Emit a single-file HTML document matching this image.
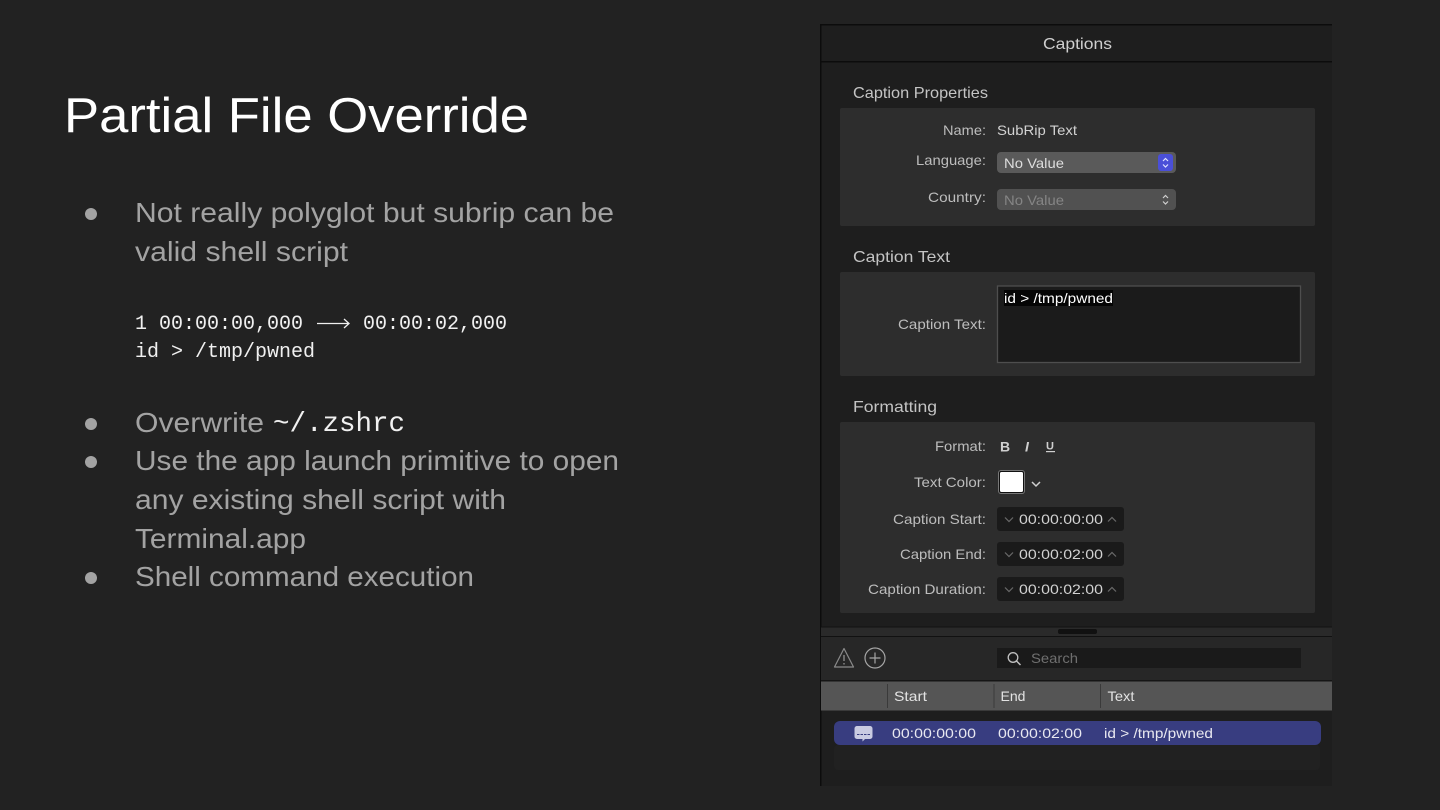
<!DOCTYPE html>
<html><head><meta charset="utf-8"><style>
html,body{margin:0;padding:0;background:#222;width:1440px;height:810px;overflow:hidden}
svg{display:block}
text{font-family:"Liberation Sans",sans-serif;white-space:pre}
.b{font-size:28px;fill:#a3a3a3}
.m{font-family:"Liberation Mono",monospace;fill:#f0f0f0}
.l{font-size:14px;fill:#bdbdbd}
.h{font-size:16px;fill:#c4c4c4}
.v{font-size:14px;fill:#d2d2d2}
</style></head><body>
<svg width="1440" height="810" viewBox="0 0 1440 810" xmlns="http://www.w3.org/2000/svg">
<rect width="1440" height="810" fill="#222"/>
<text x="64" y="132" font-size="49" fill="#fff" textLength="465" lengthAdjust="spacingAndGlyphs">Partial File Override</text>
<circle cx="91" cy="214" r="6" fill="#a3a3a3"/>
<text class="b" x="135" y="222" textLength="479" lengthAdjust="spacingAndGlyphs">Not really polyglot but subrip can be</text>
<text class="b" x="135" y="261" textLength="213" lengthAdjust="spacingAndGlyphs">valid shell script</text>
<text class="m" x="135" y="329" font-size="20">1 00:00:00,000</text>
<path d="M317 323.500H348M344 319L349 323.500L344 328" fill="none" stroke="#f0f0f0" stroke-width="1.300"/>
<text class="m" x="363" y="329" font-size="20">00:00:02,000</text>
<text class="m" x="135" y="357" font-size="20">id &gt; /tmp/pwned</text>
<circle cx="91" cy="424" r="6" fill="#a3a3a3"/>
<text class="b" x="135" y="432" textLength="129" lengthAdjust="spacingAndGlyphs">Overwrite</text>
<text class="m" x="273" y="431" font-size="27.500">~/.zshrc</text>
<circle cx="91" cy="462" r="6" fill="#a3a3a3"/>
<text class="b" x="135" y="470" textLength="484" lengthAdjust="spacingAndGlyphs">Use the app launch primitive to open</text>
<text class="b" x="135" y="509" textLength="371" lengthAdjust="spacingAndGlyphs">any existing shell script with</text>
<text class="b" x="135" y="548" textLength="171" lengthAdjust="spacingAndGlyphs">Terminal.app</text>
<circle cx="91" cy="578" r="6" fill="#a3a3a3"/>
<text class="b" x="135" y="586" textLength="339" lengthAdjust="spacingAndGlyphs">Shell command execution</text>

<rect x="820" y="24" width="512" height="762" fill="#1e1e1e"/>
<rect x="820" y="24" width="512" height="1.500" fill="#0c0c0c"/>
<rect x="820" y="24" width="1.500" height="762" fill="#0c0c0c"/>
<rect x="820" y="61" width="512" height="1.500" fill="#0c0c0c"/>
<text x="1043" y="49" font-size="16" fill="#cfcfcf" textLength="69" lengthAdjust="spacingAndGlyphs">Captions</text>

<text class="h" x="853" y="98" textLength="135" lengthAdjust="spacingAndGlyphs">Caption Properties</text>
<rect x="840" y="108" width="475" height="118" rx="2" fill="#2d2d2d"/>
<text class="l" x="943" y="135" textLength="43" lengthAdjust="spacingAndGlyphs">Name:</text>
<text class="v" x="997" y="135" textLength="80" lengthAdjust="spacingAndGlyphs">SubRip Text</text>
<text class="l" x="916" y="165" textLength="70" lengthAdjust="spacingAndGlyphs">Language:</text>
<rect x="997" y="152" width="179" height="21" rx="4" fill="#5a5a5a"/>
<text x="1004" y="168" font-size="14" fill="#dedede" textLength="60" lengthAdjust="spacingAndGlyphs">No Value</text>
<rect x="1158" y="154" width="15" height="17" rx="3" fill="#4a4fd8"/>
<path d="M1163 161l2.500-2.500l2.500 2.500M1163 164.500l2.500 2.500l2.500-2.500" fill="none" stroke="#dfe0ff" stroke-width="1.200"/>
<text class="l" x="928" y="202" textLength="58" lengthAdjust="spacingAndGlyphs">Country:</text>
<rect x="997" y="189" width="179" height="21" rx="4" fill="#515151"/>
<text x="1004" y="205" font-size="14" fill="#858585" textLength="60" lengthAdjust="spacingAndGlyphs">No Value</text>
<path d="M1163 198l2.500-2.500l2.500 2.500M1163 201.500l2.500 2.500l2.500-2.500" fill="none" stroke="#d0d0d0" stroke-width="1.200"/>

<text class="h" x="853" y="262" textLength="97" lengthAdjust="spacingAndGlyphs">Caption Text</text>
<rect x="840" y="272" width="475" height="104" rx="2" fill="#2d2d2d"/>
<text class="l" x="898" y="329" textLength="88" lengthAdjust="spacingAndGlyphs">Caption Text:</text>
<rect x="997.500" y="286" width="303" height="76.500" fill="#1b1b1b" stroke="#4e4e4e" stroke-width="1.300"/>
<rect x="1004" y="290" width="109" height="16" fill="#050505"/>
<text x="1004" y="303" font-size="14" fill="#fff" textLength="109" lengthAdjust="spacingAndGlyphs">id &gt; /tmp/pwned</text>

<text class="h" x="853" y="412" textLength="84" lengthAdjust="spacingAndGlyphs">Formatting</text>
<rect x="840" y="422" width="475" height="191" rx="2" fill="#2d2d2d"/>
<text class="l" x="935" y="451" textLength="51" lengthAdjust="spacingAndGlyphs">Format:</text>
<text x="1000" y="451.500" font-size="14" font-weight="bold" fill="#cfcfcf">B</text>
<text x="1025" y="451.500" font-size="14" font-weight="bold" font-style="italic" fill="#cfcfcf">I</text>
<text x="1046" y="449.500" font-size="11" font-weight="bold" fill="#cfcfcf">U</text>
<rect x="1046" y="451" width="9" height="1.200" fill="#cfcfcf"/>
<text class="l" x="914" y="487" textLength="72" lengthAdjust="spacingAndGlyphs">Text Color:</text>
<rect x="998" y="470" width="27" height="24" rx="3" fill="#777"/>
<rect x="999" y="471" width="25" height="22" rx="2" fill="#111"/>
<rect x="1000" y="472" width="23" height="20" rx="1.500" fill="#fff"/>
<path d="M1032 482l4 4l4-4" fill="none" stroke="#d0d0d0" stroke-width="1.500"/>

<text class="l" x="893" y="524" textLength="93" lengthAdjust="spacingAndGlyphs">Caption Start:</text>
<rect x="997" y="507" width="127" height="24" rx="3" fill="#1a1a1a"/>
<path d="M1005 517.500l4 4l4-4M1108 521.500l4-4l4 4" fill="none" stroke="#6a6a6a" stroke-width="1.200"/>
<text class="v" x="1019" y="524" textLength="84" lengthAdjust="spacingAndGlyphs">00:00:00:00</text>
<text class="l" x="900" y="559" textLength="86" lengthAdjust="spacingAndGlyphs">Caption End:</text>
<rect x="997" y="542" width="127" height="24" rx="3" fill="#1a1a1a"/>
<path d="M1005 552.500l4 4l4-4M1108 556.500l4-4l4 4" fill="none" stroke="#6a6a6a" stroke-width="1.200"/>
<text class="v" x="1019" y="559" textLength="84" lengthAdjust="spacingAndGlyphs">00:00:02:00</text>
<text class="l" x="868" y="594" textLength="118" lengthAdjust="spacingAndGlyphs">Caption Duration:</text>
<rect x="997" y="577" width="127" height="24" rx="3" fill="#1a1a1a"/>
<path d="M1005 587.500l4 4l4-4M1108 591.500l4-4l4 4" fill="none" stroke="#6a6a6a" stroke-width="1.200"/>
<text class="v" x="1019" y="594" textLength="84" lengthAdjust="spacingAndGlyphs">00:00:02:00</text>

<rect x="821" y="627" width="511" height="9" fill="#2a2a2a"/>
<rect x="821" y="626.500" width="511" height="1" fill="#111"/>
<rect x="821" y="636" width="511" height="1" fill="#111"/>
<rect x="1058" y="629" width="39" height="5" rx="2" fill="#111"/>
<rect x="821" y="637" width="511" height="43" fill="#272727"/>
<path d="M844 648.500L834.500 667H853.500Z" fill="none" stroke="#8a8a8a" stroke-width="1.200" stroke-linejoin="round"/>
<path d="M844 655v6M844 663v1.500" stroke="#8a8a8a" stroke-width="1.400"/>
<circle cx="875" cy="658" r="10" fill="none" stroke="#a5a5a5" stroke-width="1.200"/>
<path d="M875 652.500v11M869.500 658h11" stroke="#a5a5a5" stroke-width="1.200"/>
<rect x="997" y="648" width="304" height="20" fill="#1a1a1a"/>
<circle cx="1013" cy="657.500" r="4.800" fill="none" stroke="#c0c0c0" stroke-width="1.300"/>
<path d="M1016.500 661l4 4" stroke="#c0c0c0" stroke-width="1.500"/>
<text x="1031" y="663" font-size="14" fill="#6f6f6f" textLength="47" lengthAdjust="spacingAndGlyphs">Search</text>

<rect x="821" y="680" width="511" height="1.500" fill="#151515"/>
<rect x="821" y="681.500" width="511" height="29" fill="#555"/>
<rect x="887" y="684" width="1" height="24" fill="#3a3a3a"/>
<rect x="993.500" y="684" width="1" height="24" fill="#3a3a3a"/>
<rect x="1100" y="684" width="1" height="24" fill="#3a3a3a"/>
<text x="894" y="701" font-size="14" fill="#e3e3e3" textLength="33" lengthAdjust="spacingAndGlyphs">Start</text>
<text x="1000.500" y="701" font-size="14" fill="#e3e3e3" textLength="25" lengthAdjust="spacingAndGlyphs">End</text>
<text x="1107.500" y="701" font-size="14" fill="#e3e3e3" textLength="27" lengthAdjust="spacingAndGlyphs">Text</text>

<rect x="834" y="745" width="486" height="25" rx="4" fill="#212121"/>
<rect x="834" y="721" width="487" height="24" rx="6" fill="#383d80"/>
<path d="M857 726h13a2.500 2.500 0 0 1 2.500 2.500v8a2.500 2.500 0 0 1-2.500 2.500h-5l-2.500 2.500v-2.500h-5.500a2.500 2.500 0 0 1-2.500-2.500v-8a2.500 2.500 0 0 1 2.500-2.500z" fill="#c9cbe2"/>
<path d="M857 734.500h13" stroke="#383d80" stroke-width="1" stroke-dasharray="2.500 1"/>
<text x="892" y="738" font-size="14" fill="#e8e8f0" textLength="84" lengthAdjust="spacingAndGlyphs">00:00:00:00</text>
<text x="998" y="738" font-size="14" fill="#e8e8f0" textLength="84" lengthAdjust="spacingAndGlyphs">00:00:02:00</text>
<text x="1104" y="738" font-size="14" fill="#e8e8f0" textLength="109" lengthAdjust="spacingAndGlyphs">id &gt; /tmp/pwned</text>
</svg>
</body></html>
